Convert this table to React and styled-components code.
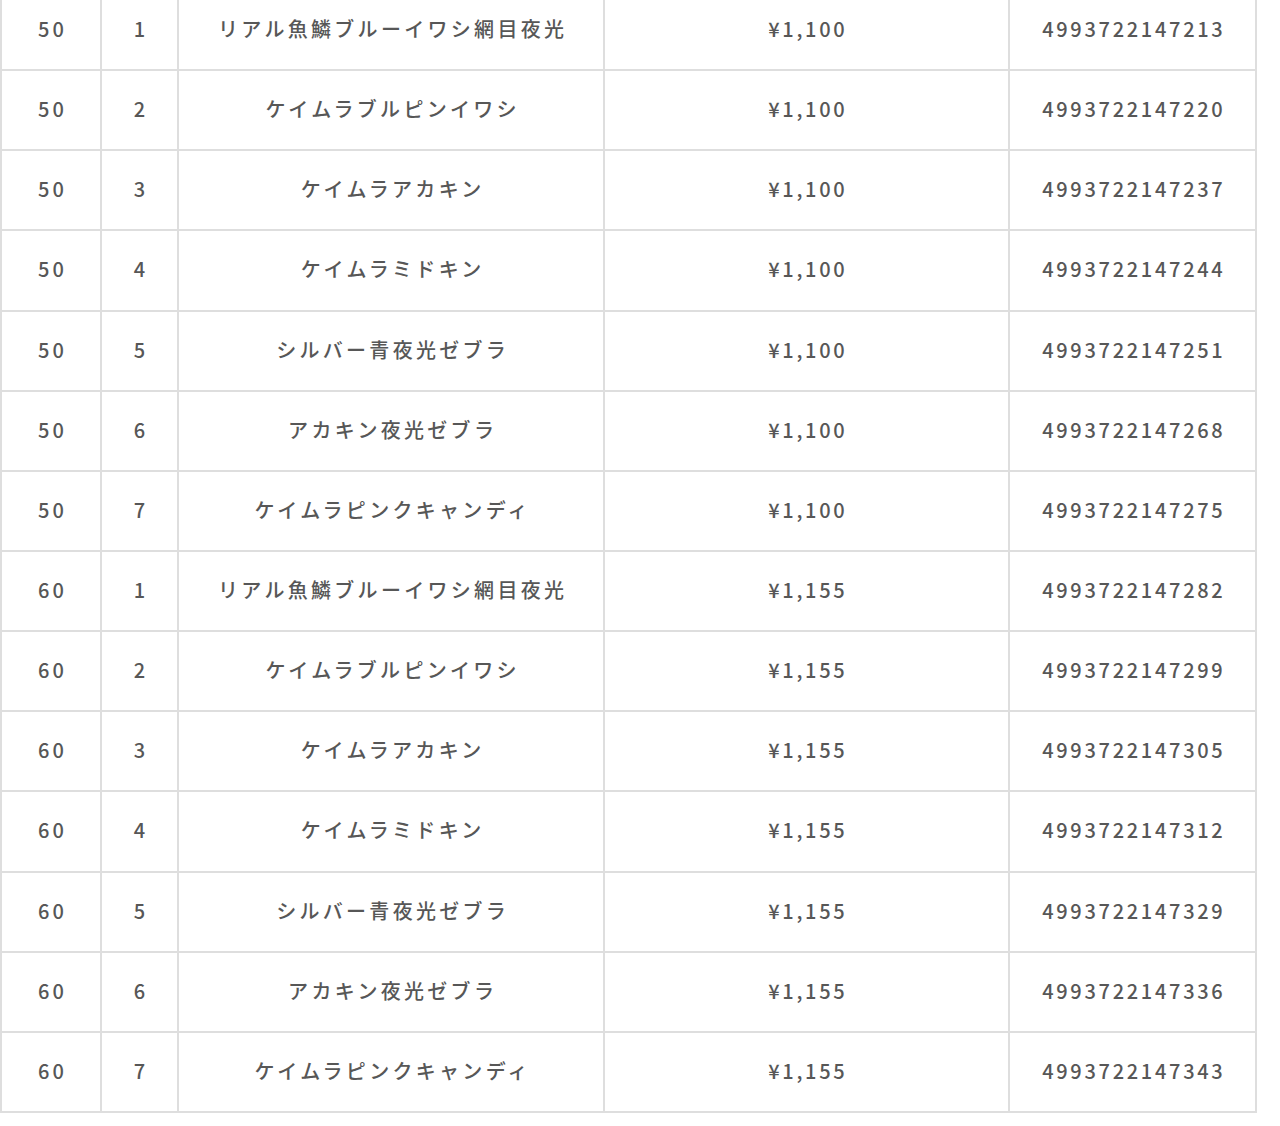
import React from "react";
import styled, { createGlobalStyle } from "styled-components";

const Global = createGlobalStyle`
  html, body { margin: 0; padding: 0; background: #fff; }
  body { font-family: "Noto Sans CJK JP", "Noto Sans", sans-serif; }
`;

const Page = styled.div`
  margin-top: -11px;
`;

const Table = styled.table`
  border-collapse: collapse;
  table-layout: fixed;
  color: #575757;
  font-size: 20px;
`;

const Cell = styled.td`
  box-sizing: content-box;
  width: ${(p) => p.$w - 2 - p.$ls}px;
  height: 75.15px;
  border: 2px solid #dedede;
  text-align: center;
  vertical-align: middle;
  padding: 0 0 3px ${(p) => p.$ls}px;
  letter-spacing: ${(p) => p.$ls}px;
  font-weight: 500;
  white-space: nowrap;
`;

const cols = [
  { w: 100, ls: 3 },
  { w: 77, ls: 3 },
  { w: 426, ls: 3.3 },
  { w: 405, ls: 2.7 },
  { w: 247, ls: 2.7 },
];

const names = [
  "リアル魚鱗ブルーイワシ網目夜光",
  "ケイムラブルピンイワシ",
  "ケイムラアカキン",
  "ケイムラミドキン",
  "シルバー青夜光ゼブラ",
  "アカキン夜光ゼブラ",
  "ケイムラピンクキャンディ",
];

const jans = [
  "4993722147213", "4993722147220", "4993722147237", "4993722147244",
  "4993722147251", "4993722147268", "4993722147275", "4993722147282",
  "4993722147299", "4993722147305", "4993722147312", "4993722147329",
  "4993722147336", "4993722147343",
];

const rows = [
  ...names.map((n, i) => ["50", String(i + 1), n, "¥1,100"]),
  ...names.map((n, i) => ["60", String(i + 1), n, "¥1,155"]),
].map((r, i) => [...r, jans[i]]);

export default function App() {
  return (
    <>
      <Global />
      <Page>
        <Table>
          <tbody>
            {rows.map((r, i) => (
              <tr key={i}>
                {r.map((v, j) => (
                  <Cell key={j} $w={cols[j].w} $ls={cols[j].ls}>
                    {v}
                  </Cell>
                ))}
              </tr>
            ))}
          </tbody>
        </Table>
      </Page>
    </>
  );
}
